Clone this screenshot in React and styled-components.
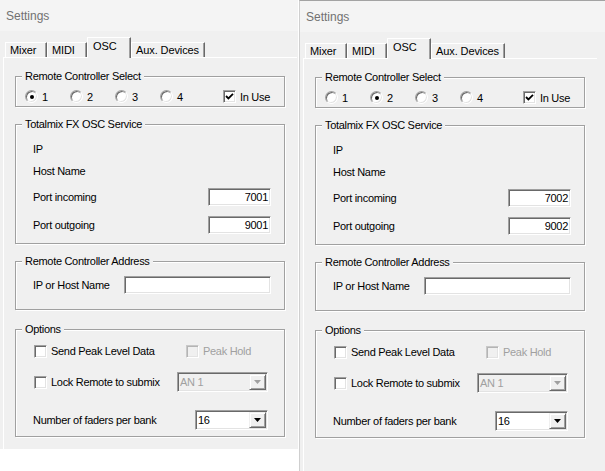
import React from 'react';
import styled, { createGlobalStyle, css } from 'styled-components';

const GlobalStyle = createGlobalStyle`
  html, body {
    margin: 0;
    padding: 0;
    background: #fff;
  }
  body {
    font-family: "Liberation Sans", Arial, sans-serif;
    font-size: 11px;
    letter-spacing: -0.3px;
    color: #000;
  }
  * {
    box-sizing: border-box;
  }
`;

const sunken = css`
  border: 1px solid;
  border-color: #a0a0a0 #fff #fff #a0a0a0;
  box-shadow: inset 1px 1px 0 #696969, inset -1px -1px 0 #e3e3e3;
`;

const Screen = styled.div`
  display: flex;
  align-items: flex-start;
  gap: 1px;
  width: 605px;
  height: 471px;
  overflow: hidden;
`;

const Window = styled.div`
  flex: none;
  display: flex;
  flex-direction: column;
  width: ${p => (p.$framed ? 306 : 298)}px;
  height: ${p => (p.$framed ? 471 : 449)}px;
  background: #f0f0f0;
  border-top: ${p => (p.$framed ? '1px solid #a3a3a3' : 'none')};
  border-left: ${p => (p.$framed ? '1px solid #cfcfcf' : 'none')};
`;

const TitleBar = styled.div`
  flex: none;
  height: 31px;
  display: flex;
  align-items: center;
  padding-left: 6px;
  background: #f4f4f4;
  color: #717171;
  font-size: 12px;
  letter-spacing: 0;
`;

const TabArea = styled.div`
  flex: 1;
  width: 294px;
  display: flex;
  flex-direction: column;
  margin: 6px 0 0 3px;
`;

const TabRow = styled.div`
  flex: none;
  height: 20px;
  display: flex;
  align-items: flex-end;
  padding-left: 2px;
`;

const Tab = styled.div`
  position: relative;
  z-index: ${p => (p.$active ? 1 : 0)};
  flex: none;
  width: ${p => p.$w}px;
  height: ${p => (p.$active ? 21 : 15)}px;
  margin-bottom: ${p => (p.$active ? -1 : 0)}px;
  padding: ${p => (p.$active ? '2px 0 0 5px' : '1px 0 0 4px')};
  line-height: 13px;
  letter-spacing: -0.1px;
  background: #f0f0f0;
  border-top: 1px solid #fff;
  border-left: 1px solid #fff;
  border-right: 1px solid #696969;
  box-shadow: inset -1px 0 0 #a0a0a0;
  white-space: nowrap;
`;

const Page = styled.div`
  flex: 1;
  display: flex;
  flex-direction: column;
  padding: 0 12px 0 11px;
  border-top: 1px solid #fff;
  border-left: 1px solid #fff;
`;

const Group = styled.fieldset`
  margin: ${p => p.$mt}px 0 0;
  padding: 0;
  min-width: 0;
  border: 1px solid #a0a0a0;
  box-shadow: 1px 1px 0 #fff, inset 1px 1px 0 #fff;
`;

const Legend = styled.legend`
  margin-left: 6px;
  padding: 0 3px;
  line-height: 13px;
  background: #f0f0f0;
`;

const GroupBody = styled.div`
  display: flex;
  flex-direction: column;
  padding: ${p => p.$pt}px 13px ${p => p.$pb}px ${p => p.$pl}px;
`;

const Row = styled.div`
  display: flex;
  align-items: center;
  height: ${p => p.$h || 18}px;
  margin-top: ${p => p.$mt || 0}px;
  padding-right: ${p => p.$pr || 0}px;
`;

const Label = styled.span`
  white-space: nowrap;
  margin-left: ${p => p.$ml || 0}px;
  color: ${p => (p.$disabled ? '#a0a0a0' : '#000')};
`;

const Choice = styled.label`
  display: flex;
  align-items: center;
  gap: 4px;
  flex: none;
  width: ${p => (p.$w ? `${p.$w}px` : 'auto')};
  margin-left: ${p => p.$ml || 0}px;
  height: 13px;
`;

const RadioCircle = styled.span`
  flex: none;
  width: 13px;
  height: 13px;
  border-radius: 50%;
  ${sunken};
  background: #fff;
  display: flex;
  align-items: center;
  justify-content: center;

  &::after {
    content: '';
    width: 4px;
    height: 4px;
    border-radius: 50%;
    background: ${p => (p.$on ? '#000' : 'transparent')};
  }
`;

const CheckSquare = styled.span`
  flex: none;
  width: 13px;
  height: 13px;
  display: flex;
  align-items: center;
  justify-content: center;
  ${sunken};
  background: ${p => (p.$disabled ? '#f0f0f0' : '#fff')};
  ${p =>
    p.$disabled &&
    css`
      border-color: #c8c8c8 #fff #fff #c8c8c8;
      box-shadow: inset 1px 1px 0 #b4b4b4, inset -1px -1px 0 #e3e3e3;
    `}
`;

const Field = styled.div`
  flex: none;
  margin-left: auto;
  width: ${p => p.$w}px;
  height: 18px;
  ${sunken};
  background: #fff;
  padding: 0 2px;
  line-height: 16px;
  text-align: right;
`;

const Combo = styled.div`
  flex: none;
  margin-left: auto;
  width: ${p => p.$w}px;
  height: 20px;
  ${sunken};
  display: flex;
  align-items: stretch;
  padding: 1px;
  background: ${p => (p.$disabled ? '#f0f0f0' : '#fff')};
  color: ${p => (p.$disabled ? '#a0a0a0' : '#000')};
`;

const ComboText = styled.span`
  flex: 1;
  padding-left: 1px;
  line-height: 16px;
`;

const DropButton = styled.span`
  flex: none;
  width: 17px;
  display: flex;
  align-items: center;
  justify-content: center;
  background: #f0f0f0;
  border: 1px solid;
  border-color: #f0f0f0 #696969 #696969 #f0f0f0;
  box-shadow: inset 1px 1px 0 #fff, inset -1px -1px 0 #a0a0a0;
`;

const Radio = ({ on, children }) => (
  <Choice $w={45}>
    <RadioCircle $on={on} />
    <Label>{children}</Label>
  </Choice>
);

const Check = ({ checked, disabled, w, ml, children }) => (
  <Choice $w={w} $ml={ml}>
    <CheckSquare $disabled={disabled}>
      {checked && (
        <svg width="9" height="9" viewBox="0 0 9 9">
          <polyline points="1,4 3.4,6.4 8,1.8" fill="none" stroke="#000" strokeWidth="1.8" />
        </svg>
      )}
    </CheckSquare>
    <Label $disabled={disabled}>{children}</Label>
  </Choice>
);

const Select = ({ value, w, disabled }) => (
  <Combo $w={w} $disabled={disabled}>
    <ComboText>{value}</ComboText>
    <DropButton>
      <svg width="7" height="4" viewBox="0 0 7 4">
        <polygon points="0,0 7,0 3.5,4" fill={disabled ? '#a0a0a0' : '#000'} />
      </svg>
    </DropButton>
  </Combo>
);

const tabs = [
  { name: 'Mixer', w: 42 },
  { name: 'MIDI', w: 40 },
  { name: 'OSC', w: 44, active: true },
  { name: 'Aux. Devices', w: 74 },
];

const SettingsWindow = ({ remote, inPort, outPort, framed }) => (
  <Window $framed={framed}>
    <TitleBar>Settings</TitleBar>
    <TabArea>
      <TabRow>
        {tabs.map(t => (
          <Tab key={t.name} $w={t.w} $active={t.active}>{t.name}</Tab>
        ))}
      </TabRow>
      <Page>
        <Group $mt={12}>
          <Legend>Remote Controller Select</Legend>
          <GroupBody $pt={7} $pb={3} $pl={9}>
            <Row $h={13}>
              {[1, 2, 3, 4].map(n => (
                <Radio key={n} on={n === remote}>{n}</Radio>
              ))}
              <Check checked ml={18}>In Use</Check>
            </Row>
          </GroupBody>
        </Group>

        <Group $mt={11}>
          <Legend>Totalmix FX OSC Service</Legend>
          <GroupBody $pt={9} $pb={9} $pl={17}>
            <Row>
              <Label>IP</Label>
            </Row>
            <Row $mt={4}>
              <Label>Host Name</Label>
            </Row>
            <Row $mt={8}>
              <Label>Port incoming</Label>
              <Field $w={63}>{inPort}</Field>
            </Row>
            <Row $mt={10}>
              <Label>Port outgoing</Label>
              <Field $w={63}>{outPort}</Field>
            </Row>
          </GroupBody>
        </Group>

        <Group $mt={11}>
          <Legend>Remote Controller Address</Legend>
          <GroupBody $pt={8} $pb={15} $pl={17}>
            <Row>
              <Label>IP or Host Name</Label>
              <Field $w={147} />
            </Row>
          </GroupBody>
        </Group>

        <Group $mt={13}>
          <Legend>Options</Legend>
          <GroupBody $pt={6} $pb={6} $pl={18}>
            <Row>
              <Check w={152}>Send Peak Level Data</Check>
              <Check disabled>Peak Hold</Check>
            </Row>
            <Row $h={20} $mt={12} $pr={3}>
              <Check>Lock Remote to submix</Check>
              <Select value="AN 1" w={91} disabled />
            </Row>
            <Row $h={20} $mt={18} $pr={3}>
              <Label $ml={-1}>Number of faders per bank</Label>
              <Select value="16" w={73} />
            </Row>
          </GroupBody>
        </Group>
      </Page>
    </TabArea>
  </Window>
);

const App = () => (
  <>
    <GlobalStyle />
    <Screen>
      <SettingsWindow remote={1} inPort="7001" outPort="9001" />
      <SettingsWindow remote={2} inPort="7002" outPort="9002" framed />
    </Screen>
  </>
);

export default App;
